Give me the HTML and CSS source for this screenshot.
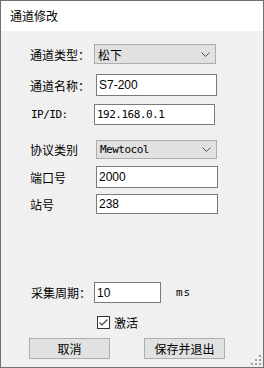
FILE: index.html
```html
<!DOCTYPE html>
<html lang="zh">
<head>
    <meta charset="UTF-8">
    <title>通道修改</title>
    <link rel="stylesheet" href="styles.css">
</head>
<body>

    <div class="window">
        <div class="titlebar">通道修改</div>

        <div class="form">
            <div class="row r1">
                <span class="label">通道类型：</span>
                <div class="select">松下<svg class="chev" width="9" height="5" viewBox="0 0 9 5"><polyline points="0.5,0.5 4.5,4.5 8.5,0.5" fill="none" stroke="#555" stroke-width="1"/></svg></div>
            </div>
            <div class="row r2">
                <span class="label">通道名称：</span>
                <input class="field shift wide" type="text" value="S7-200">
            </div>
            <div class="row r3">
                <span class="label mono shift-l">IP/ID:</span>
                <input class="field mono-val" type="text" value="192.168.0.1">
            </div>
            <div class="row r4">
                <span class="label">协议类别</span>
                <div class="select shift mono-val">Mewtocol<svg class="chev" width="9" height="5" viewBox="0 0 9 5"><polyline points="0.5,0.5 4.5,4.5 8.5,0.5" fill="none" stroke="#555" stroke-width="1"/></svg></div>
            </div>
            <div class="row r5">
                <span class="label">端口号</span>
                <input class="field shift wide" type="text" value="2000">
            </div>
            <div class="row r6">
                <span class="label">站号</span>
                <input class="field shift wide" type="text" value="238">
            </div>

            <div class="row r7">
                <span class="label shift-l">采集周期：</span>
                <input class="field short" type="text" value="10">
                <span class="unit">ms</span>
            </div>

            <div class="check-row">
                <svg class="checkbox" width="13" height="13" viewBox="0 0 13 13">
                    <rect x="0.5" y="0.5" width="12" height="12" fill="#fff" stroke="#333"/>
                    <polyline points="2.5,6.5 5,9 10.5,3.5" fill="none" stroke="#444" stroke-width="1.2"/>
                </svg>
                <span>激活</span>
            </div>

            <div class="buttons">
                <button class="btn">取消</button>
                <button class="btn">保存并退出</button>
            </div>
        </div>

        <svg class="grip" width="10" height="10" viewBox="0 0 10 10">
            <rect x="8" y="0" width="2" height="2" fill="#a0a0a0"/>
            <rect x="4" y="4" width="2" height="2" fill="#a0a0a0"/>
            <rect x="8" y="4" width="2" height="2" fill="#a0a0a0"/>
            <rect x="0" y="8" width="2" height="2" fill="#a0a0a0"/>
            <rect x="4" y="8" width="2" height="2" fill="#a0a0a0"/>
            <rect x="8" y="8" width="2" height="2" fill="#a0a0a0"/>
        </svg>
    </div>

</body>
</html>
```

FILE: styles.css
```css
body {
    margin: 0;
    font-family: "Noto Sans CJK SC", "Liberation Sans", sans-serif;
    font-size: 12px;
    color: #000;
}
.window {
    position: relative;
    width: 262px;
    height: 366px;
    border: 1px solid #707070;
    background: #f0f0f0;
}
.titlebar {
    height: 30px;
    line-height: 30px;
    padding-left: 9px;
    background: #fff;
}
.form {
    padding-left: 29px;
}
.row {
    display: flex;
    align-items: center;
}
.label {
    width: 64px;
    flex: none;
    white-space: nowrap;
}
.mono {
    font-family: "DejaVu Sans Mono", monospace;
    font-size: 11px;
    letter-spacing: -0.5px;
}
.shift-l {
    padding-left: 1px;
    width: 63px;
}
.shift {
    margin-left: 2px;
}
.select {
    box-sizing: border-box;
    display: flex;
    align-items: center;
    justify-content: space-between;
    width: 122px;
    height: 20px;
    padding: 0 5px 0 3px;
    background: #e1e1e1;
    border: 1px solid #adadad;
}
.r4 .select {
    width: 121px;
    height: 19px;
}
.field {
    box-sizing: border-box;
    width: 121px;
    height: 21px;
    margin-top: 0;
    margin-bottom: 0;
    margin-right: 0;
    padding: 0 2px;
    border: 1px solid #7a7a7a;
    background: #fff;
    font-family: "Liberation Sans", "Noto Sans CJK SC", sans-serif;
    font-size: 12px;
    color: #000;
    outline: none;
}
.r3 .field {
    margin-left: 0;
}
.wide {
    width: 122px;
}
.short {
    width: 67px;
    margin-left: 0;
}
.mono-val {
    font-family: "DejaVu Sans Mono", monospace;
    font-size: 11px;
    letter-spacing: -0.5px;
}
.r1 { margin-top: 13px; height: 20px; }
.r2 { margin-top: 10px; height: 22px; }
.r2 .field { height: 22px; width: 121px; }
.r3 { margin-top: 8px; height: 21px; }
.r4 { margin-top: 15px; height: 19px; }
.r5 { margin-top: 7px; height: 22px; }
.r5 .field { height: 22px; }
.r6 { margin-top: 6px; height: 20px; }
.r6 .field { height: 20px; }
.r7 { margin-top: 68px; height: 21px; }
.unit {
    margin-left: 15px;
    font-family: "DejaVu Sans Mono", monospace;
    font-size: 11px;
    letter-spacing: 1px;
}
.check-row {
    display: flex;
    align-items: center;
    gap: 4px;
    margin-top: 13px;
    padding-left: 67px;
    height: 13px;
}
.buttons {
    display: flex;
    gap: 34px;
    margin-top: 9px;
    margin-left: -1px;
}
.btn {
    width: 81px;
    height: 21px;
    padding: 0;
    background: #e1e1e1;
    border: 1px solid #adadad;
    font-family: "Noto Sans CJK SC", sans-serif;
    font-size: 12px;
    color: #000;
}
.grip {
    position: absolute;
    right: 2px;
    bottom: 2px;
}
```
